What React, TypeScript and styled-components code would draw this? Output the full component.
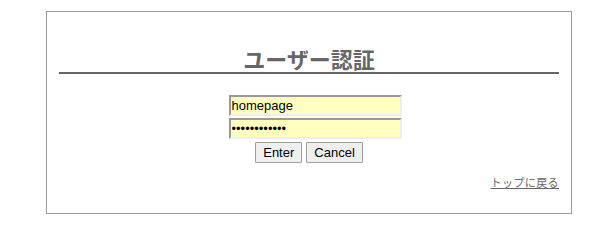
import React from "react";
import styled, { createGlobalStyle } from "styled-components";

const GlobalStyle = createGlobalStyle`
  body {
    margin: 0;
    background: #ffffff;
    font-family: "Liberation Sans", "Noto Sans CJK JP", sans-serif;
  }
`;

const Page = styled.div`
  padding: 11px 0 0 46px;
`;

const Panel = styled.div`
  width: 500px;
  height: 201px;
  border: 1px solid #999999;
  padding: 0 12px;
`;

const Title = styled.h1`
  margin: 0;
  padding-top: 32px;
  height: 28px;
  line-height: 28px;
  text-align: center;
  font-family: "Noto Sans CJK JP", sans-serif;
  font-size: 22px;
  font-weight: bold;
  color: #666666;
  border-bottom: 2px solid #666666;
`;

const Form = styled.form`
  display: flex;
  flex-direction: column;
  align-items: center;
  gap: 2px;
  margin-top: 21px;
`;

const Field = styled.input`
  box-sizing: border-box;
  width: 173px;
  height: 21px;
  margin: 0 0 0 12px;
  padding: 0 1px;
  border-style: solid;
  border-width: 2px;
  border-color: #999999 #eeeeee #eeeeee #999999;
  background: #ffffc0;
  font-family: "Liberation Sans", sans-serif;
  font-size: 13px;
  color: #000000;
  outline: none;
`;

const Buttons = styled.div`
  display: flex;
  gap: 4px;
  margin-top: 1px;
`;

const Button = styled.button`
  height: 21px;
  padding: 0 7px;
  border: 1px solid #a0a0a0;
  border-radius: 1px;
  background: #efefef;
  font-family: "Liberation Sans", sans-serif;
  font-size: 13px;
  color: #000000;
`;

const Footer = styled.div`
  display: flex;
  justify-content: flex-end;
  margin-top: 11px;
`;

const BackLink = styled.a`
  font-family: "Noto Sans CJK JP", sans-serif;
  font-size: 11px;
  letter-spacing: 0.4px;
  color: #666666;
  text-decoration: underline;
`;

export default function App() {
  return (
    <>
      <GlobalStyle />
      <Page>
        <Panel>
          <Title>ユーザー認証</Title>
          <Form onSubmit={(e) => e.preventDefault()}>
            <Field type="text" defaultValue="homepage" />
            <Field type="password" defaultValue="homepage1234" />
            <Buttons>
              <Button type="submit">Enter</Button>
              <Button type="button">Cancel</Button>
            </Buttons>
          </Form>
          <Footer>
            <BackLink href="#">トップに戻る</BackLink>
          </Footer>
        </Panel>
      </Page>
    </>
  );
}
